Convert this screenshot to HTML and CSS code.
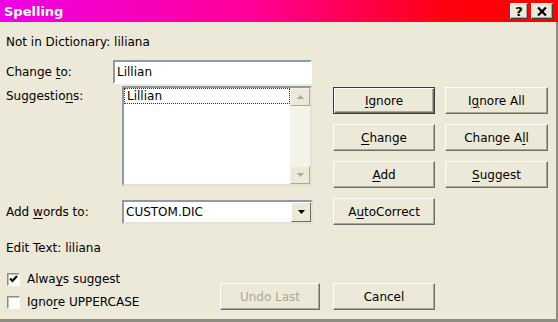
FILE: index.html
```html
<!DOCTYPE html>
<html lang="en">
<head>
  <meta charset="UTF-8" />
  <title>Spelling</title>
  <link rel="stylesheet" href="styles.css">
</head>
<body>
  <div class="dialog">
    <div class="titlebar">
      <span class="title">Spelling</span>
      <div class="caption-btns">
        <span class="cap-btn help">?</span>
        <span class="cap-btn close">
          <svg width="10" height="9" viewBox="0 0 10 9"><path d="M1 0.5 L9 8.5 M9 0.5 L1 8.5" stroke="#000" stroke-width="2.2" fill="none"/></svg>
        </span>
      </div>
    </div>

    <div class="content">
      <div class="top">
        <div class="left">
          <div class="info">Not in Dictionary: liliana</div>

          <div class="row change-row">
            <span class="lbl">Change <u>t</u>o:</span>
            <div class="textbox">Lillian</div>
          </div>

          <div class="row sugg-row">
            <span class="lbl">Suggestio<u>n</u>s:</span>
            <div class="listbox">
              <div class="list-items">
                <div class="item focus">Lillian</div>
              </div>
              <div class="vscroll">
                <span class="sb-btn">
                  <svg width="7" height="4" viewBox="0 0 7 4"><path d="M0 4 L3.5 0 L7 4 Z" fill="#aca899"/></svg>
                </span>
                <span class="sb-track"></span>
                <span class="sb-btn">
                  <svg width="7" height="4" viewBox="0 0 7 4"><path d="M0 0 L3.5 4 L7 0 Z" fill="#aca899"/></svg>
                </span>
              </div>
            </div>
          </div>

          <div class="row add-row">
            <span class="lbl">Add <u>w</u>ords to:</span>
            <div class="combo">
              <span class="combo-text">CUSTOM.DIC</span>
              <span class="combo-btn">
                <svg width="7" height="4" viewBox="0 0 7 4"><path d="M0 0 L3.5 4 L7 0 Z" fill="#000"/></svg>
              </span>
            </div>
          </div>

          <div class="info edit">Edit Text: liliana</div>
        </div>

        <div class="buttons">
          <button class="btn default"><u>I</u>gnore</button>
          <button class="btn">I<u>g</u>nore All</button>
          <button class="btn"><u>C</u>hange</button>
          <button class="btn">Change A<u>l</u>l</button>
          <button class="btn"><u>A</u>dd</button>
          <button class="btn"><u>S</u>uggest</button>
          <button class="btn">A<u>u</u>toCorrect</button>
        </div>
      </div>

      <div class="bottom">
        <div class="checks">
          <div class="check">
            <span class="box">
              <svg width="9" height="8" viewBox="0 0 9 8"><path d="M1 3.5 L3.5 6 L8 1" stroke="#000" stroke-width="2" fill="none"/></svg>
            </span>
            <span>Alwa<u>y</u>s suggest</span>
          </div>
          <div class="check">
            <span class="box"></span>
            <span>Igno<u>r</u>e UPPERCASE</span>
          </div>
        </div>
        <button class="btn undo" disabled>Undo Last</button>
        <button class="btn cancel">Cancel</button>
      </div>
    </div>
  </div>
</body>
</html>
```

FILE: styles.css
```css
body {
  margin: 0;
  background-color: #ece9d8;
  font-family: "DejaVu Sans", Verdana, sans-serif;
  font-size: 12px;
  color: #000;
}
u {
  text-underline-offset: 2px;
}
.dialog {
  width: 558px;
  height: 322px;
  background-color: #ece9d8;
  overflow: hidden;
}

/* title bar */
.titlebar {
  height: 22px;
  display: flex;
  align-items: center;
  justify-content: space-between;
  padding-left: 4px;
  padding-right: 5px;
  box-sizing: border-box;
  background: linear-gradient(to right, #ee00e6 0%, #ff0098 45%, #ff0010 80%, #ff0000 100%);
}
.title {
  color: #fff;
  font-weight: bold;
  font-size: 13px;
}
.caption-btns {
  display: flex;
  gap: 3px;
}
.cap-btn {
  height: 16px;
  display: flex;
  align-items: center;
  justify-content: center;
  background-color: #ece9d8;
  box-sizing: border-box;
  border: 1px solid;
  border-color: #fff #404040 #404040 #fff;
  box-shadow: inset -1px -1px #aca899;
  font-weight: bold;
  font-size: 13px;
}
.help {
  width: 18px;
}
.close {
  width: 22px;
}

/* body */
.content {
  height: 300px;
  box-sizing: border-box;
  border-right: 2px solid #8e8c80;
  border-bottom: 3px solid #8e8c80;
}
.top {
  display: flex;
  height: 236px;
}
.left {
  width: 313px;
  padding-left: 6px;
  box-sizing: border-box;
}
.info {
  line-height: 16px;
  padding-top: 12px;
  margin-bottom: 10px;
}
.info.edit {
  padding-top: 0;
  margin-top: 16px;
}
.row {
  display: flex;
}
.lbl {
  width: 107px;
  flex-shrink: 0;
}
.change-row {
  align-items: center;
  height: 24px;
}
.textbox {
  width: 199px;
  height: 24px;
  box-sizing: border-box;
  background-color: #fff;
  border: 2px solid;
  border-color: #8f9ba3 #fff #fff #8f9ba3;
  padding: 3px 0 0 2px;
}
.sugg-row {
  margin-top: 2px;
}
.sugg-row .lbl {
  padding-top: 3px;
}
.listbox {
  margin-left: 9px;
  width: 190px;
  height: 100px;
  box-sizing: border-box;
  background-color: #fff;
  border: 2px solid;
  border-color: #8f9ba3 #e4e2d6 #e4e2d6 #8f9ba3;
  display: flex;
}
.list-items {
  flex: 1;
}
.item {
  height: 16px;
  line-height: 14px;
  padding-left: 2px;
  box-sizing: border-box;
}
.item.focus {
  border: 1px dotted #333;
}
.vscroll {
  width: 20px;
  display: flex;
  flex-direction: column;
  background-color: #f4f3ea;
}
.sb-btn {
  height: 18px;
  display: flex;
  align-items: center;
  justify-content: center;
  background-color: #ece9d8;
  box-sizing: border-box;
  border: 1px solid;
  border-color: #f4f3ea #aca899 #aca899 #f4f3ea;
}
.sb-track {
  flex: 1;
}
.add-row {
  margin-top: 14px;
  align-items: center;
  height: 24px;
}
.combo {
  margin-left: 9px;
  width: 191px;
  height: 24px;
  box-sizing: border-box;
  background-color: #fff;
  border: 2px solid;
  border-color: #8f9ba3 #e4e2d6 #e4e2d6 #8f9ba3;
  display: flex;
  align-items: center;
}
.combo-text {
  flex: 1;
  padding-left: 2px;
}
.combo-btn {
  width: 20px;
  height: 20px;
  display: flex;
  align-items: center;
  justify-content: center;
  background-color: #ece9d8;
  box-sizing: border-box;
  border: 1px solid;
  border-color: #fff #716f64 #716f64 #fff;
}

/* command buttons */
.buttons {
  margin-left: 20px;
  padding-top: 65px;
  display: grid;
  grid-template-columns: 102px 103px;
  grid-auto-rows: 27px;
  column-gap: 10px;
  row-gap: 10px;
  align-content: start;
}
.btn {
  font-family: inherit;
  font-size: inherit;
  color: #000;
  background-color: #ece9d8;
  border: 1px solid;
  border-color: #fff #716f64 #716f64 #fff;
  box-shadow: inset -1px -1px #aca899;
  padding: 0;
  height: 27px;
}
.btn.default {
  border-color: #3a3a3a;
  box-shadow: inset 1px 1px #fff, inset -1px -1px #716f64, inset -2px -2px #aca899;
}
.btn:disabled {
  color: #aca899;
}

/* bottom */
.bottom {
  display: flex;
  padding-left: 6px;
}
.checks {
  width: 214px;
  padding-top: 12px;
}
.check {
  height: 18px;
  margin-bottom: 5px;
  display: flex;
  align-items: center;
  gap: 7px;
}
.box {
  width: 13px;
  height: 13px;
  margin-left: 1px;
  box-sizing: border-box;
  background-color: #fff;
  border: 1px solid;
  border-color: #8f8d82 #fff #fff #8f8d82;
  box-shadow: inset 1px 1px #c4c1b4;
  display: flex;
  align-items: center;
  justify-content: center;
}
.undo {
  margin-top: 25px;
  width: 100px;
}
.cancel {
  margin-top: 25px;
  margin-left: 13px;
  width: 102px;
}
```
